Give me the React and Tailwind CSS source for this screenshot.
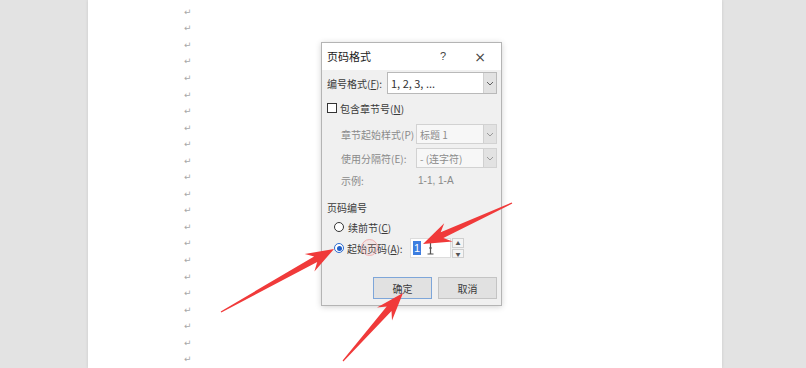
import React from "react";

const F = { fontFamily: '"Noto Sans CJK SC", "Noto Sans", sans-serif' };

function arrowPts(tx, ty, px, py, hl = 24, hw = 10, sw = 3.2) {
  const dx = px - tx, dy = py - ty;
  const L = Math.hypot(dx, dy);
  const ux = dx / L, uy = dy / L;
  const nx = -uy, ny = ux;
  const bx = px - ux * hl, by = py - uy * hl;
  const p = [
    [tx + nx * 0.6, ty + ny * 0.6],
    [bx + ux * 5 + nx * sw, by + uy * 5 + ny * sw],
    [bx - ux * 2 + nx * hw, by - uy * 2 + ny * hw],
    [px, py],
    [bx - ux * 2 - nx * hw, by - uy * 2 - ny * hw],
    [bx + ux * 5 - nx * sw, by + uy * 5 - ny * sw],
    [tx - nx * 0.6, ty - ny * 0.6],
  ];
  return p.map((q) => q.map((v) => v.toFixed(1)).join(",")).join(" ");
}

function Chevron({ color = "#606060" }) {
  return (
    <svg width="8" height="5" viewBox="0 0 8 5">
      <path d="M1 1 L4 4 L7 1" fill="none" stroke={color} strokeWidth="1" />
    </svg>
  );
}

function Combo({ text, disabled, w, h, tc = "" }) {
  return (
    <div
      className={`shrink-0 flex items-stretch border ${disabled ? "border-[#d2d2d2] bg-[#f7f7f7]" : "border-[#b9b9b9] bg-white"} ${w} ${h}`}
    >
      <div className={`flex-1 flex items-center pl-[3px] whitespace-nowrap ${tc} ${disabled ? "text-[#8c8c8c]" : "text-[#333]"}`}>
        {text}
      </div>
      <div className="w-[13px] flex items-center justify-center bg-[#e2e2e2] border-l border-[#d0d0d0]">
        <Chevron color={disabled ? "#9a9a9a" : "#606060"} />
      </div>
    </div>
  );
}

export default function App() {
  const marks = Array.from({ length: 22 });
  return (
    <div className="relative w-[806px] h-[368px] overflow-hidden bg-[#e3e3e3] flex" style={F}>
      <div className="w-[88px] shrink-0" />
      <div className="w-[634px] shrink-0 bg-white shadow-[0_0_3px_rgba(0,0,0,0.12)] pt-[4px] pl-[96px] flex flex-col">
        {marks.map((_, i) => (
          <div key={i} className="h-[16.67px] flex items-center text-[9px] leading-none text-[#a8a8a8]" style={{ fontFamily: '"DejaVu Sans", sans-serif' }}>
            ↵
          </div>
        ))}
      </div>

      {/* dialog */}
      <div className="absolute left-[321px] top-[42px] w-[181px] h-[264px] border border-[#b4b4b4] bg-[#f0f0f0] shadow-[0_1px_6px_rgba(0,0,0,0.18)] flex flex-col text-[10px] text-[#3a3a3a] whitespace-nowrap">
        <div className="h-[27px] bg-white flex items-center pl-[5px] text-[11px] text-[#222]">
          <span className="flex-1">页码格式</span>
          <span className="w-[32px] text-center text-[11px] text-[#444]" style={{ fontFamily: '"Liberation Sans", sans-serif' }}>?</span>
          <span className="w-[42px] text-center text-[14px] leading-none text-[#444]" style={{ fontFamily: '"DejaVu Sans", sans-serif' }}>×</span>
        </div>
        <div className="flex flex-col pl-[5px] pr-[4px]">
          <div className="h-[26px] flex items-center">
            <span className="w-[60px] shrink-0">编号格式(<u>F</u>):</span>
            <Combo text="1, 2, 3, ..." w="w-[110px]" h="h-[22px]" tc="text-[11px]" />
          </div>
          <div className="h-[24px] flex items-center">
            <div className="w-[10px] h-[10px] shrink-0 border border-[#333] bg-white mr-[3px]" />
            <span>包含章节号(<u>N</u>)</span>
          </div>
          <div className="mt-[2px] h-[24px] flex items-center pl-[14px] text-[#8a8a8a]">
            <span className="w-[75px] shrink-0">章节起始样式(P)</span>
            <Combo text="标题 1" disabled w="w-[81px]" h="h-[20px]" />
          </div>
          <div className="h-[24px] flex items-center pl-[14px] text-[#8a8a8a]">
            <span className="w-[75px] shrink-0">使用分隔符(E):</span>
            <Combo text="-  (连字符)" disabled w="w-[81px]" h="h-[20px]" />
          </div>
          <div className="h-[20px] flex items-center pl-[14px] text-[#8a8a8a]">
            <span className="w-[77px] shrink-0">示例:</span>
            <span style={{ fontFamily: '"Liberation Sans", sans-serif' }}>1-1, 1-A</span>
          </div>
          <div className="mt-[7px] h-[20px] flex items-center">页码编号</div>
          <div className="h-[20px] flex items-center pl-[7px]">
            <div className="w-[10px] h-[10px] shrink-0 rounded-full border border-[#333] bg-white mr-[4px]" />
            <span>续前节(<u>C</u>)</span>
          </div>
          <div className="h-[22px] flex items-center pl-[7px]">
            <div className="w-[10px] h-[10px] shrink-0 rounded-full border border-[#2a6ad0] bg-white mr-[3px] flex items-center justify-center">
              <div className="w-[5px] h-[5px] rounded-full bg-[#1f5fc8]" />
            </div>
            <span className="relative w-[63px] shrink-0">
              起始页码(<u>A</u>):
              <span className="absolute left-[14px] top-[-2px] w-[17px] h-[17px] rounded-full border border-[#f2b0b0] bg-[rgba(255,150,150,0.12)]" />
            </span>
            <div className="w-[41px] h-[20px] shrink-0 bg-white border border-[#dcdcdc] flex items-center pl-[2px]">
              <span className="bg-[#3d7ee0] text-white text-[11px] px-[1px] leading-[14px]" style={{ fontFamily: '"Liberation Sans", sans-serif' }}>1</span>
              <svg className="ml-[6px]" width="7" height="14" viewBox="0 0 7 14">
                <path d="M0.5 1 H2.5 Q3.5 1 3.5 2 V12 Q3.5 13 2.5 13 H0.5 M6.5 1 H4.5 Q3.5 1 3.5 2 M3.5 12 Q3.5 13 4.5 13 H6.5 M2 7 H5" fill="none" stroke="#555" strokeWidth="1.2" />
              </svg>
            </div>
            <div className="ml-[1px] w-[12px] h-[20px] shrink-0 flex flex-col gap-[1px]">
              <div className="flex-1 border border-[#cfcfcf] bg-[#f4f4f4] flex items-center justify-center text-[5px] leading-none text-[#555]">▲</div>
              <div className="flex-1 border border-[#cfcfcf] bg-[#f4f4f4] flex items-center justify-center text-[5px] leading-none text-[#555]">▼</div>
            </div>
          </div>
          <div className="mt-[18px] flex justify-end gap-[6px]">
            <div className="w-[59px] h-[22px] border border-[#7ea6d9] bg-[#e1e1e1] flex items-center justify-center">确定</div>
            <div className="w-[59px] h-[22px] border border-[#c4c4c4] bg-[#e1e1e1] flex items-center justify-center">取消</div>
          </div>
        </div>
      </div>

      {/* arrows */}
      <svg className="absolute left-0 top-0 pointer-events-none" width="806" height="368" viewBox="0 0 806 368">
        <polygon points={arrowPts(512, 203, 423, 244, 26, 10, 3.2)} fill="#f03a3a" />
        <polygon points={arrowPts(221, 312, 334, 249, 26, 10, 3.2)} fill="#f03a3a" />
        <polygon points={arrowPts(343, 361, 403, 293, 26, 10, 3.2)} fill="#f03a3a" />
      </svg>
    </div>
  );
}
